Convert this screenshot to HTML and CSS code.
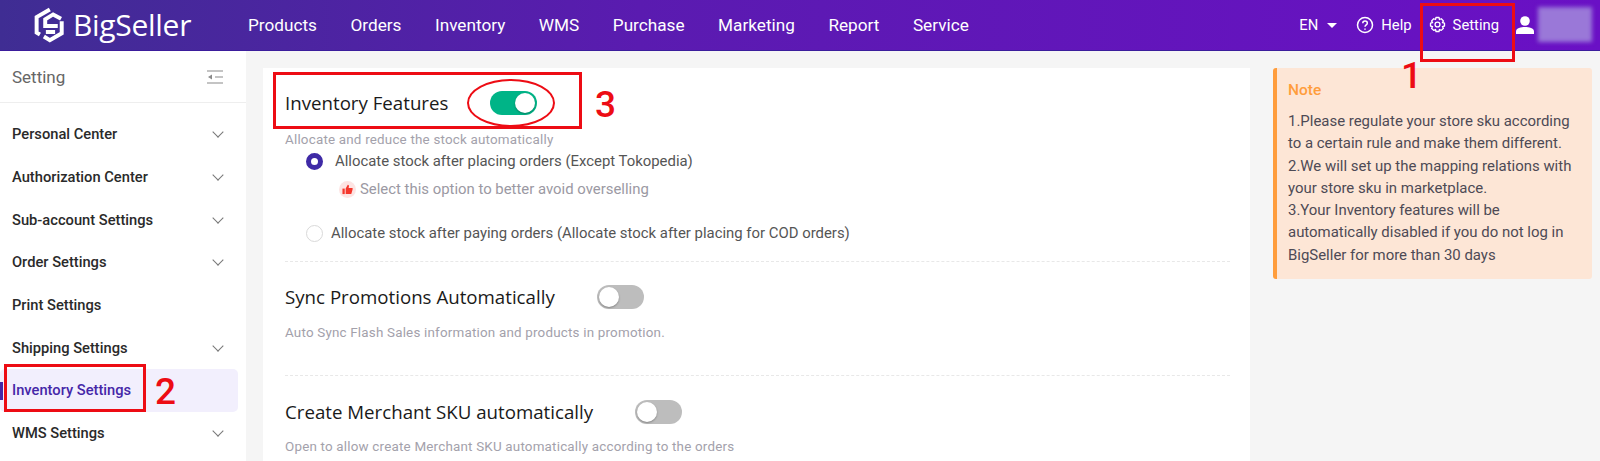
FILE: index.html
```html
<!DOCTYPE html>
<html lang="en">

<head>
    <meta charset="utf-8">
    <title>BigSeller Setting</title>
    <link rel="stylesheet" href="styles.css">
</head>

<body>
    <header class="topbar">
        <div class="logo">
            <svg class="logo-mark" viewBox="25 20 100 114" width="33" height="38" fill="none" stroke="#fff" stroke-width="12">
                <path d="M76 30 L36 53 V100 L46 106"/>
                <path d="M110 58 L86 45 L62 60 V80 H100"/>
                <path d="M112 66 V102 L76 123 L58 112 M64 98 H92"/>
            </svg>
            <span class="logo-text">BigSeller</span>
        </div>
        <nav class="nav">
            <a>Products</a>
            <a>Orders</a>
            <a>Inventory</a>
            <a>WMS</a>
            <a>Purchase</a>
            <a>Marketing</a>
            <a>Report</a>
            <a>Service</a>
        </nav>
        <div class="top-right">
            <span class="lang">EN <i class="caret"></i></span>
            <span class="top-link">
                <svg viewBox="0 0 18 18" width="18" height="18" fill="none" stroke="#fff" stroke-width="1.5">
                    <circle cx="9" cy="9" r="7.5"/>
                    <path d="M6.8 7.2 C6.8 4.4 11.3 4.4 11.3 7.2 C11.3 8.9 9 8.9 9 10.8"/>
                    <path d="M9 12.4 V13.8"/>
                </svg>
                Help
            </span>
            <span class="top-link">
                <svg viewBox="0 0 18 18" width="17" height="17" fill="none" stroke="#fff" stroke-width="1.4" stroke-linejoin="round">
                    <path d="M7.4 1.6 H10.6 L11.1 3.7 L13 2.9 L15.3 5.2 L14.2 7 L16.4 7.6 V10.6 L14.2 11.2 L15.3 13 L13 15.2 L11.1 14.3 L10.6 16.4 H7.4 L6.9 14.3 L5 15.2 L2.7 13 L3.8 11.2 L1.6 10.6 V7.6 L3.8 7 L2.7 5.2 L5 2.9 L6.9 3.7 Z"/>
                    <circle cx="9" cy="9" r="2.6"/>
                </svg>
                Setting
            </span>
            <svg class="user-icon" viewBox="0 0 20 20" width="20" height="20" fill="#fff">
                <circle cx="10" cy="6" r="4.8"/>
                <path d="M1 19 V16.5 C1 13 6 12 10 12 C14 12 19 13 19 16.5 V19 Z"/>
            </svg>
            <span class="user-blur"></span>
        </div>
    </header>

    <div class="page">
        <aside class="sidebar">
            <div class="side-head">
                <span>Setting</span>
                <svg viewBox="0 0 16 14" width="16" height="14" fill="none" stroke="#8a8a8a" stroke-width="1.2">
                    <path d="M0 1 H16 M8 7 H16 M0 13 H16"/>
                    <path d="M5 4.5 V9.5 L1 7 Z" fill="#8a8a8a" stroke="none"/>
                </svg>
            </div>
            <ul class="side-menu">
                <li>Personal Center <i class="chev"></i></li>
                <li>Authorization Center <i class="chev"></i></li>
                <li>Sub-account Settings <i class="chev"></i></li>
                <li>Order Settings <i class="chev"></i></li>
                <li>Print Settings</li>
                <li>Shipping Settings <i class="chev"></i></li>
                <li class="active">Inventory Settings</li>
                <li>WMS Settings <i class="chev"></i></li>
            </ul>
        </aside>

        <main class="content">
            <section class="card">
                <div class="block block-first">
                    <div class="feature-head">
                        <h3>Inventory Features</h3>
                        <span class="switch on"></span>
                    </div>
                    <p class="hint hint-tight">Allocate and reduce the stock automatically</p>
                    <div class="radio-row checked-row">
                        <i class="radio checked"></i>
                        <span>Allocate stock after placing orders (Except Tokopedia)</span>
                    </div>
                    <div class="tip">
                        <i class="thumb">
                            <svg viewBox="0 0 12 12" width="11" height="11" fill="#f5372c">
                                <path d="M0.5 5 H3 V11 H0.5 Z"/>
                                <path d="M4 5 L6.3 0.8 C7.5 0.8 7.8 2 7.5 3 L7.2 4.4 H11 C11.5 4.4 11.8 5 11.6 5.6 L10.3 10.4 C10.2 10.8 9.9 11 9.5 11 H4 Z"/>
                            </svg>
                        </i>
                        <span>Select this option to better avoid overselling</span>
                    </div>
                    <div class="radio-row">
                        <i class="radio"></i>
                        <span>Allocate stock after paying orders (Allocate stock after placing for COD orders)</span>
                    </div>
                </div>
                <div class="block">
                    <div class="feature-head">
                        <h3>Sync Promotions Automatically</h3>
                        <span class="switch"></span>
                    </div>
                    <p class="hint">Auto Sync Flash Sales information and products in promotion.</p>
                </div>
                <div class="block block-last">
                    <div class="feature-head">
                        <h3>Create Merchant SKU automatically</h3>
                        <span class="switch"></span>
                    </div>
                    <p class="hint">Open to allow create Merchant SKU automatically according to the orders</p>
                </div>
            </section>

            <aside class="note">
                <h4>Note</h4>
                <p>1.Please regulate your store sku according to a certain rule and make them different.<br>
                2.We will set up the mapping relations with your store sku in marketplace.<br>
                3.Your Inventory features will be automatically disabled if you do not log in BigSeller for more than 30 days</p>
            </aside>
        </main>
    </div>

    <!-- red marks drawn on top of the screenshot -->
    <div class="mark box-setting"></div>
    <div class="mark box-menu"></div>
    <div class="mark box-feature"></div>
    <div class="mark oval"></div>
    <span class="num num-1">1</span>
    <span class="num num-2">2</span>
    <span class="num num-3">3</span>
</body>

</html>
```
FILE: styles.css
```css
* {
    box-sizing: border-box;
}

html, body {
    height: 100%;
}

body {
    margin: 0;
    overflow: hidden;
    position: relative;
    font-family: Roboto, "Liberation Sans", sans-serif;
    background-color: #f5f5f5;
}

ul {
    list-style-type: none;
    margin: 0;
    padding: 0;
}

/* top bar */
.topbar {
    display: flex;
    align-items: center;
    height: 51px;
    padding-left: 33px;
    padding-bottom: 1px;
    color: #fff;
    background: linear-gradient(90deg, #3f2d93 0%, #5a1bb0 40%, #6a10c5 100%);
    border-bottom: 1px solid #3b1d9c;
}

.logo {
    display: flex;
    align-items: center;
    width: 215px;
}

.logo-mark {
    flex: none;
}

.logo-text {
    margin-left: 7px;
    font-family: "Open Sans", sans-serif;
    font-size: 30px;
    font-weight: 400;
    letter-spacing: -0.3px;
    line-height: 1;
}

.nav {
    display: flex;
    gap: 33.5px;
    font-size: 17.2px;
    font-weight: 400;
}

.top-right {
    display: flex;
    align-items: center;
    margin-left: auto;
    padding-right: 8px;
    font-size: 14.8px;
    font-weight: 400;
}

.lang {
    display: flex;
    align-items: center;
    gap: 9px;
    margin-right: 19px;
}

.caret {
    width: 0;
    height: 0;
    border-left: 5px solid transparent;
    border-right: 5px solid transparent;
    border-top: 5px solid #fff;
    margin-top: 2px;
}

.top-link {
    display: flex;
    align-items: center;
    gap: 7px;
    margin-right: 17px;
}

.user-icon {
    margin-left: -1px;
}

.user-blur {
    width: 54px;
    height: 35px;
    margin-left: 3px;
    background-color: #9a78d8;
    filter: blur(2px);
}

/* page */
.page {
    display: flex;
    height: 410px;
    overflow: hidden;
}

.sidebar {
    flex: none;
    width: 246px;
    background-color: #fff;
}

.side-head {
    display: flex;
    align-items: center;
    justify-content: space-between;
    height: 52px;
    padding: 0 23px 0 12px;
    font-size: 17px;
    color: #666;
    border-bottom: 1px solid #eee;
}

.side-menu {
    padding-top: 10px;
}

.side-menu li {
    display: flex;
    align-items: center;
    justify-content: space-between;
    height: 42.7px;
    padding: 0 14px 0 12px;
    margin-right: 8px;
    font-size: 14.7px;
    font-weight: 500;
    color: #2a2a2a;
}

.side-menu .active {
    position: relative;
    color: #4527a8;
    background-color: #f2effd;
    border-radius: 5px;
}

.side-menu .active::before {
    content: "";
    position: absolute;
    left: 0;
    top: 13px;
    width: 3px;
    height: 18px;
    background-color: #4527a8;
}

.chev {
    width: 8px;
    height: 8px;
    margin-top: -4px;
    margin-right: 2px;
    border-right: 1.3px solid #777;
    border-bottom: 1.3px solid #777;
    transform: rotate(45deg);
}

.content {
    display: flex;
    flex: 1;
    padding: 17px 8px 0 17px;
}

.card {
    width: 987px;
    padding: 0 20px 0 22px;
    background-color: #fff;
}

.block {
    padding-top: 18px;
    height: 114px;
    border-bottom: 1px dashed #e8e8e8;
}

.block-first {
    height: 194px;
}

.block-last {
    height: 85px;
    padding-top: 19px;
    border-bottom: 0;
}

.feature-head {
    display: flex;
    align-items: center;
    gap: 42px;
    height: 34px;
}

h3 {
    margin: -2px 0 0;
    font-family: "Open Sans", sans-serif;
    font-size: 18.7px;
    font-weight: 400;
    color: #1a1a1a;
}

.switch {
    position: relative;
    width: 47px;
    height: 24px;
    border-radius: 12px;
    background-color: #bdbdbd;
}

.switch::after {
    content: "";
    position: absolute;
    top: 2px;
    left: 2px;
    width: 20px;
    height: 20px;
    border-radius: 50%;
    background-color: #fff;
    box-shadow: 0 1px 2px rgba(0, 0, 0, 0.3);
}

.switch.on {
    background-color: #00b487;
}

.switch.on::after {
    left: 25px;
}

.hint {
    margin: 11px 0 0;
    font-size: 13.4px;
    letter-spacing: 0.2px;
    color: #a3a1ab;
}

.block-last .hint {
    margin-top: 10px;
}

.hint-tight {
    margin-top: 12px;
}

.radio-row {
    display: flex;
    align-items: center;
    margin-top: 26px;
    padding-left: 21px;
    font-size: 14.9px;
    color: #555;
}

.checked-row {
    margin-top: 5px;
}

.radio-row span {
    margin-left: 8px;
}

.checked-row .radio + span {
    margin-left: 12px;
}

.radio {
    flex: none;
    width: 17px;
    height: 17px;
    border-radius: 50%;
    background-color: #fff;
    border: 1px solid #d9d9d9;
}

.radio.checked {
    border: 5px solid #3f2aa6;
}

.tip {
    display: flex;
    align-items: center;
    margin-top: 10px;
    padding-left: 54px;
    font-size: 14.9px;
    color: #9b99a3;
}

.thumb {
    display: flex;
    align-items: center;
    justify-content: center;
    width: 17px;
    height: 17px;
    margin-right: 4px;
    border-radius: 50%;
    background-color: #fde4e3;
}

.note {
    align-self: flex-start;
    width: 319px;
    height: 211px;
    margin-left: 23px;
    padding: 13px 15px 0 11px;
    color: #4d4a55;
    background-color: #fde6d6;
    border-left: 4px solid #ff9d3c;
    border-radius: 3px;
}

.note h4 {
    margin: 0 0 11px;
    font-size: 15.5px;
    font-weight: 500;
    color: #ff9d3c;
}

.note p {
    margin: 0;
    font-size: 14.95px;
    line-height: 22.3px;
}

/* annotations */
.mark {
    position: absolute;
    border: 3px solid #ed0c14;
}

.box-setting {
    left: 1420px;
    top: 3px;
    width: 95px;
    height: 59px;
}

.box-menu {
    left: 4px;
    top: 364px;
    width: 142px;
    height: 48px;
}

.box-feature {
    left: 273px;
    top: 72px;
    width: 309px;
    height: 57px;
}

.oval {
    left: 467px;
    top: 79px;
    width: 88px;
    height: 48px;
    border-width: 2px;
    border-radius: 50%;
}

.num {
    position: absolute;
    font-family: Roboto, sans-serif;
    font-size: 37px;
    font-weight: 500;
    line-height: 1;
    color: #ed0c14;
}

.num-1 {
    left: 1401px;
    top: 57px;
}

.num-2 {
    left: 155px;
    top: 373px;
}

.num-3 {
    left: 595px;
    top: 86px;
}
```
